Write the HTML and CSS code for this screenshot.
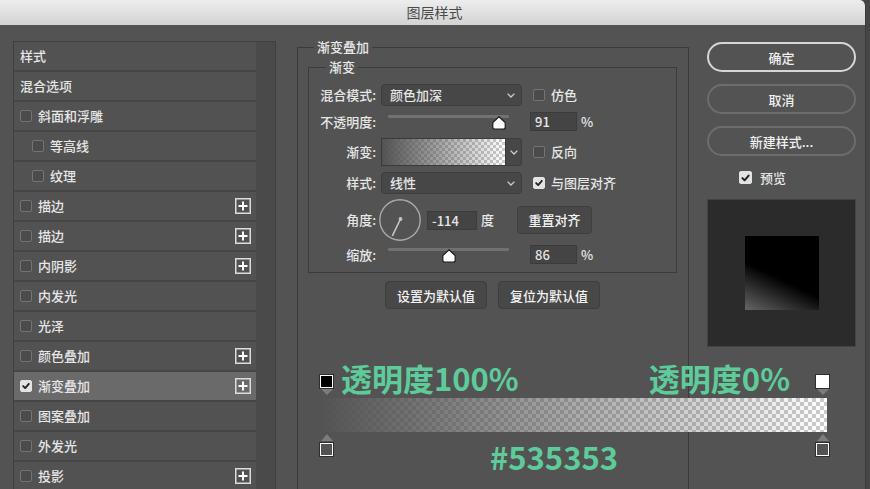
FILE: index.html
```html
<!DOCTYPE html>
<html lang="zh-CN">
<head>
<meta charset="utf-8">
<title>图层样式</title>
<link rel="stylesheet" href="styles.css">
</head>
<body>
<div class="window">
  <div class="titlebar">图层样式</div>
  <div class="main">
    <div class="sidebar">
      <ul class="list">
        <li class="item head">样式</li>
        <li class="item head">混合选项</li>
        <li class="item"><span class="cb"></span>斜面和浮雕</li>
        <li class="item sub"><span class="cb"></span>等高线</li>
        <li class="item sub"><span class="cb"></span>纹理</li>
        <li class="item"><span class="cb"></span>描边<svg class="plus" viewBox="0 0 16 16"><rect x="0.75" y="0.75" width="14.5" height="14.5" fill="none" stroke="#dcdcdc" stroke-width="1.5"/><path d="M8 3.5V12.5M3.5 8H12.5" stroke="#fff" stroke-width="2"/></svg></li>
        <li class="item"><span class="cb"></span>描边<svg class="plus" viewBox="0 0 16 16"><rect x="0.75" y="0.75" width="14.5" height="14.5" fill="none" stroke="#dcdcdc" stroke-width="1.5"/><path d="M8 3.5V12.5M3.5 8H12.5" stroke="#fff" stroke-width="2"/></svg></li>
        <li class="item"><span class="cb"></span>内阴影<svg class="plus" viewBox="0 0 16 16"><rect x="0.75" y="0.75" width="14.5" height="14.5" fill="none" stroke="#dcdcdc" stroke-width="1.5"/><path d="M8 3.5V12.5M3.5 8H12.5" stroke="#fff" stroke-width="2"/></svg></li>
        <li class="item"><span class="cb"></span>内发光</li>
        <li class="item"><span class="cb"></span>光泽</li>
        <li class="item"><span class="cb"></span>颜色叠加<svg class="plus" viewBox="0 0 16 16"><rect x="0.75" y="0.75" width="14.5" height="14.5" fill="none" stroke="#dcdcdc" stroke-width="1.5"/><path d="M8 3.5V12.5M3.5 8H12.5" stroke="#fff" stroke-width="2"/></svg></li>
        <li class="item on"><span class="cb checked"><svg viewBox="0 0 12 12"><path d="M2.6 6.1L5 8.5L9.4 3.4" fill="none" stroke="#222" stroke-width="2.2" stroke-linecap="round" stroke-linejoin="round"/></svg></span>渐变叠加<svg class="plus" viewBox="0 0 16 16"><rect x="0.75" y="0.75" width="14.5" height="14.5" fill="none" stroke="#dcdcdc" stroke-width="1.5"/><path d="M8 3.5V12.5M3.5 8H12.5" stroke="#fff" stroke-width="2"/></svg></li>
        <li class="item"><span class="cb"></span>图案叠加</li>
        <li class="item"><span class="cb"></span>外发光</li>
        <li class="item"><span class="cb"></span>投影<svg class="plus" viewBox="0 0 16 16"><rect x="0.75" y="0.75" width="14.5" height="14.5" fill="none" stroke="#dcdcdc" stroke-width="1.5"/><path d="M8 3.5V12.5M3.5 8H12.5" stroke="#fff" stroke-width="2"/></svg></li>
      </ul>
      <div class="scroll"></div>
    </div>

    <fieldset class="group outer">
      <legend>渐变叠加</legend>
      <fieldset class="group inner">
        <legend>渐变</legend>
        <div class="row r-blend">
          <span class="lbl">混合模式:</span>
          <div class="select"><span>颜色加深</span><svg class="chev" viewBox="0 0 8 5"><path d="M0.6 0.6L4 4L7.4 0.6" fill="none" stroke="#cfcfcf" stroke-width="1.3"/></svg></div>
          <label class="check"><span class="cb"></span>仿色</label>
        </div>
        <div class="row r-opacity">
          <span class="lbl">不透明度:</span>
          <div class="slider"><div class="track"></div><svg class="thumb op" viewBox="0 0 14 14"><path d="M7 0.8L13.2 6.6V11.2Q13.2 13.2 11.2 13.2H2.8Q0.8 13.2 0.8 11.2V6.6Z" fill="#fff" stroke="#1c1c1c" stroke-width="1.2"/></svg></div>
          <span class="field">91</span><span class="unit">%</span>
        </div>
        <div class="row r-grad">
          <span class="lbl">渐变:</span>
          <div class="grad"><div class="grad-swatch"></div><div class="grad-drop"><svg class="chev" viewBox="0 0 8 5"><path d="M0.6 0.6L4 4L7.4 0.6" fill="none" stroke="#cfcfcf" stroke-width="1.3"/></svg></div></div>
          <label class="check"><span class="cb"></span>反向</label>
        </div>
        <div class="row r-style">
          <span class="lbl">样式:</span>
          <div class="select"><span>线性</span><svg class="chev" viewBox="0 0 8 5"><path d="M0.6 0.6L4 4L7.4 0.6" fill="none" stroke="#cfcfcf" stroke-width="1.3"/></svg></div>
          <label class="check"><span class="cb checked"><svg viewBox="0 0 12 12"><path d="M2.6 6.1L5 8.5L9.4 3.4" fill="none" stroke="#222" stroke-width="2.2" stroke-linecap="round" stroke-linejoin="round"/></svg></span>与图层对齐</label>
        </div>
        <div class="row r-angle">
          <span class="lbl">角度:</span>
          <svg class="dial" viewBox="0 0 42 42"><circle cx="21" cy="21" r="20.2" fill="none" stroke="#a9a9a9" stroke-width="1.4"/><path d="M21.5 20L13.6 36.4" stroke="#c4c4c4" stroke-width="1.6" stroke-linecap="round"/><circle cx="21.5" cy="20" r="1.9" fill="#c4c4c4"/></svg>
          <span class="field angle">-114</span><span class="unit">度</span>
          <span class="btn reset">重置对齐</span>
        </div>
        <div class="row r-scale">
          <span class="lbl">缩放:</span>
          <div class="slider"><div class="track"></div><svg class="thumb sc" viewBox="0 0 14 14"><path d="M7 0.8L13.2 6.6V11.2Q13.2 13.2 11.2 13.2H2.8Q0.8 13.2 0.8 11.2V6.6Z" fill="#fff" stroke="#1c1c1c" stroke-width="1.2"/></svg></div>
          <span class="field">86</span><span class="unit">%</span>
        </div>
      </fieldset>
      <div class="defaults">
        <span class="btn">设置为默认值</span>
        <span class="btn">复位为默认值</span>
      </div>
    </fieldset>

    <div class="actions">
      <span class="pill primary">确定</span>
      <span class="pill">取消</span>
      <span class="pill">新建样式...</span>
      <label class="check preview-toggle"><span class="cb big checked"><svg viewBox="0 0 12 12"><path d="M2.6 6.1L5 8.5L9.4 3.4" fill="none" stroke="#222" stroke-width="2.2" stroke-linecap="round" stroke-linejoin="round"/></svg></span>预览</label>
      <div class="preview"><div class="preview-swatch"></div></div>
    </div>
  </div>

  <div class="gx">
    <div class="gx-top">
      <div class="stop"><span class="stop-sq black"></span><span class="tri-down"></span></div>
      <span class="note first">透明度100%</span>
      <span class="spacer"></span>
      <span class="note last">透明度0%</span>
      <div class="stop"><span class="stop-sq white"></span><span class="tri-down"></span></div>
    </div>
    <div class="gx-bar"></div>
    <div class="gx-bottom">
      <div class="stop"><span class="tri-up"></span><span class="stop-sq gray"></span></div>
      <span class="note hex">#535353</span>
      <span class="spacer"></span>
      <div class="stop"><span class="tri-up"></span><span class="stop-sq gray"></span></div>
    </div>
  </div>
</div>
</body>
</html>
```

FILE: styles.css
```css
* { box-sizing: border-box; }
html, body { margin: 0; padding: 0; }
body {
  width: 870px;
  height: 489px;
  overflow: hidden;
  background: #464646;
  font-family: "Noto Sans CJK SC", "Noto Sans", sans-serif;
  font-size: 13px;
  font-weight: 500;
  color: #e6e6e6;
}

.window {
  position: relative;
  width: 866px;
  height: 489px;
  background: #535353;
  overflow: hidden;
  border-top-right-radius: 6px;
  border-right: 1px solid #3c3c3c;
}

.titlebar {
  height: 25px;
  background: linear-gradient(#ededed, #d3d3d3);
  color: #4a4a4a;
  font-size: 14px;
  font-weight: 400;
  line-height: 25px;
  text-align: center;
  padding-left: 4px;
}

.main { display: flex; align-items: flex-start; }

/* left list */
.sidebar {
  display: flex;
  width: 263px;
  height: 470px;
  margin: 16px 0 0 13px;
  border: 1px solid #404040;
  border-bottom: none;
}
.list { list-style: none; margin: 0; padding: 0; width: 242px; background: #525252; }
.scroll { width: 19px; background: #4a4a4a; }
.item {
  height: 30px;
  display: flex;
  align-items: center;
  padding-left: 6px;
  border-bottom: 2px solid #454545;
  line-height: 18px;
}
.item.sub { padding-left: 18px; }
.item.on { background: #6a6a6a; }
.plus { width: 16px; height: 16px; margin-left: auto; margin-right: 5px; display: block; }

.cb {
  width: 12px;
  height: 12px;
  flex: none;
  margin-right: 6px;
  border: 1px solid #747474;
  border-radius: 2px;
  background: #4b4b4b;
  display: inline-flex;
  align-items: center;
  justify-content: center;
}
.cb svg { width: 12px; height: 12px; display: block; }
.cb.checked { background: #e3e3e3; border-color: #e3e3e3; }
.cb.big { width: 13px; height: 13px; margin-right: 8px; }

/* middle groups */
.group { margin: 0; border: 1px solid #3b3b3b; min-width: 0; }
.group > legend { padding: 0 3px; line-height: 18px; color: #e8e8e8; }
.outer { width: 392px; height: 480px; margin: 13px 0 0 21px; padding: 2px 11px 0 10px; }
.outer > legend { margin-left: 6px; }
.inner { width: 369px; padding: 8px 0 8px 0; }
.inner > legend { margin-left: 17px; }

.row { display: flex; align-items: center; line-height: 18px; }
.r-blend { height: 22px; margin-bottom: 6px; }
.r-opacity { height: 19px; margin-bottom: 7px; }
.r-grad { height: 28px; margin-bottom: 6px; }
.r-style { height: 22px; margin-bottom: 5px; }
.r-angle { height: 42px; margin-bottom: 4px; }
.r-scale { height: 19px; }

.lbl { width: 67px; margin-right: 5px; text-align: right; flex: none; }

.select {
  width: 141px;
  height: 22px;
  flex: none;
  margin-right: 11px;
  padding: 0 6px 0 8px;
  background: #474747;
  border: 1px solid #3d3d3d;
  border-radius: 4px;
  display: flex;
  align-items: center;
  justify-content: space-between;
}
.chev { width: 8px; height: 5px; display: block; }

.check { display: flex; align-items: center; }

.slider { position: relative; width: 141px; height: 19px; flex: none; margin-right: 8px; }
.track { margin: 3px 13px 0 7px; height: 3px; background: #717171; border-radius: 1px; }
.thumb { position: absolute; top: 4px; width: 14px; height: 14px; }
.thumb.op { left: 111px; }
.thumb.sc { left: 61px; }

.field {
  width: 47px;
  height: 19px;
  flex: none;
  background: #444;
  border: 1px solid #3c3c3c;
  padding-left: 4px;
  line-height: 17px;
}
.field.angle { width: 50px; }
.unit { margin-left: 4px; }

.grad { display: flex; width: 141px; height: 28px; flex: none; margin-right: 11px; }
.grad-swatch {
  flex: 1;
  border: 1px solid #3a3a3a;
  background-image: linear-gradient(to right, #535353, rgba(83, 83, 83, 0)), repeating-conic-gradient(#cbcbcb 0 25%, #ffffff 0 50%);
  background-size: 100% 100%, 6px 6px;
}
.grad-drop {
  width: 16px;
  background: #474747;
  border: 1px solid #3d3d3d;
  border-left: none;
  border-radius: 0 4px 4px 0;
  display: flex;
  align-items: center;
  justify-content: center;
}

.dial { width: 42px; height: 42px; flex: none; margin: 0 6px 0 -2px; }

.btn {
  height: 28px;
  flex: none;
  background: #484848;
  border: 1px solid #3e3e3e;
  border-radius: 4px;
  color: #f3f3f3;
  display: flex;
  align-items: center;
  justify-content: center;
}
.reset { width: 75px; margin-left: 23px; }

.defaults { display: flex; justify-content: center; gap: 11px; margin-top: 8px; }
.defaults .btn { width: 102px; }

/* right column */
.actions { width: 149px; margin: 17px 0 0 18px; display: flex; flex-direction: column; }
.pill {
  height: 30px;
  margin-bottom: 12px;
  border: 2px solid #6d6d6d;
  border-radius: 15px;
  color: #f0f0f0;
  display: flex;
  align-items: center;
  justify-content: center;
}
.pill.primary { border-color: #d6d6d6; }
.preview-toggle { height: 13px; margin: 3px 0 15px; padding-left: 32px; }
.preview {
  height: 148px;
  background: #2b2b2b;
  border: 1px solid #434343;
  display: flex;
  align-items: center;
  justify-content: center;
}
.preview-swatch { width: 74px; height: 74px; background: linear-gradient(206deg, #000 56%, #656565 100%); }

/* pasted gradient editor overlay */
.gx { position: absolute; left: 320px; top: 360px; width: 509px; }
.gx-top { display: flex; align-items: flex-end; height: 36px; }
.gx-bar {
  width: 507px;
  height: 34px;
  margin-top: 2px;
  background-image: linear-gradient(to right, #535353, rgba(83, 83, 83, 0)), repeating-conic-gradient(#cbcbcb 0 25%, #ffffff 0 50%);
  background-size: 100% 100%, 8px 8px;
}
.gx-bottom { display: flex; align-items: flex-start; height: 45px; margin-top: 2px; }
.spacer { flex: 1; }
.stop { width: 13px; flex: none; display: flex; flex-direction: column; align-items: center; }
.gx-top .stop { margin-bottom: 1px; }
.stop-sq { width: 13px; height: 13px; border: 1.5px solid #fff; box-shadow: 0 0 0 1px #2e2e2e; }
.stop-sq.black { background: #000; }
.stop-sq.white { background: #fff; }
.stop-sq.gray { background: #535353; }
.tri-down { width: 0; height: 0; margin-top: 1px; border-left: 6px solid transparent; border-right: 6px solid transparent; border-top: 6px solid #7c7c7c; }
.tri-up { width: 0; height: 0; margin-bottom: 2px; border-left: 6px solid transparent; border-right: 6px solid transparent; border-bottom: 7px solid #7c7c7c; }

.note {
  color: #5ecb9b;
  font-size: 31px;
  font-weight: 700;
  line-height: 36px;
  white-space: nowrap;
}
.note.first { margin-left: 8px; }
.note.last { margin-right: 26px; }
.note.hex { margin-left: 157px; line-height: 45px; }
```
